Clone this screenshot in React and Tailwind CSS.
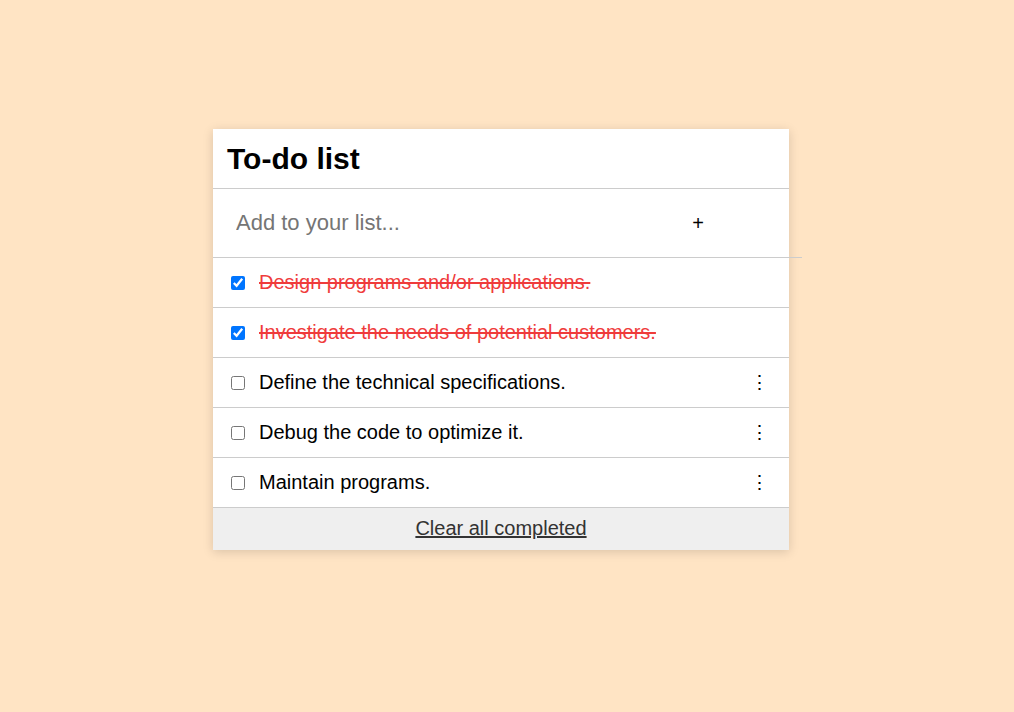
import React, { useState } from "react";

const initialTodos = [
  { id: 1, text: "Design programs and/or applications.", done: true },
  { id: 2, text: "Investigate the needs of potential customers.", done: true },
  { id: 3, text: "Define the technical specifications.", done: false },
  { id: 4, text: "Debug the code to optimize it.", done: false },
  { id: 5, text: "Maintain programs.", done: false },
];

const TodoItem = ({ todo, onToggle }) => {
  return (
    <li className="flex items-center h-[50px] border-b border-[#cccccc] pl-[18px] pr-[27px]">
      <input
        type="checkbox"
        checked={todo.done}
        onChange={() => onToggle(todo.id)}
        className="w-[14px] h-[14px] m-0 accent-[#0075ff]"
      />
      <span
        className={`ml-[14px] flex-1 text-[20px] leading-none pb-[2px] ${
          todo.done ? "line-through text-[#ef3b3b]" : "text-black"
        }`}
      >
        {todo.text}
      </span>
      {!todo.done && (
        <button type="button" className="text-[19px] leading-none text-black w-[12px] text-center">
          ⋮
        </button>
      )}
    </li>
  );
};

const App = () => {
  const [todos, setTodos] = useState(initialTodos);
  const [text, setText] = useState("");

  const toggle = (id) =>
    setTodos(todos.map((t) => (t.id === id ? { ...t, done: !t.done } : t)));

  const addTodo = (e) => {
    e.preventDefault();
    if (!text.trim()) return;
    setTodos([...todos, { id: Date.now(), text, done: false }]);
    setText("");
  };

  return (
    <div
      className="min-h-[712px] w-full bg-[#ffe4c4] flex justify-center pt-[129px] pr-[12px]"
      style={{ fontFamily: '"Liberation Sans", Arial, sans-serif' }}
    >
      <div className="w-[576px] h-fit bg-white shadow-[0_2px_10px_rgba(0,0,0,0.15)]">
        <div className="h-[60px] border-b border-[#cccccc] flex items-center px-[14px]">
          <h1 className="text-[30px] font-bold text-black leading-none">To-do list</h1>
        </div>
        <form
          onSubmit={addTodo}
          className="w-[589px] h-[69px] border-b border-[#cccccc] flex items-center"
        >
          <input
            type="text"
            value={text}
            onChange={(e) => setText(e.target.value)}
            placeholder="Add to your list..."
            className="flex-1 h-full pl-[23px] text-[22px] text-black placeholder:text-[#757575] outline-none bg-transparent"
          />
          <button type="submit" className="w-[60px] mr-[74px] text-[20px] leading-none text-black text-center">
            +
          </button>
        </form>
        <ul>
          {todos.map((todo) => (
            <TodoItem key={todo.id} todo={todo} onToggle={toggle} />
          ))}
        </ul>
        <div className="h-[42px] bg-[#efefef] flex items-center justify-center">
          <button
            type="button"
            onClick={() => setTodos(todos.filter((t) => !t.done))}
            className="text-[20px] text-[#333333] underline leading-none pb-[2px]"
          >
            Clear all completed
          </button>
        </div>
      </div>
    </div>
  );
};

export default App;
